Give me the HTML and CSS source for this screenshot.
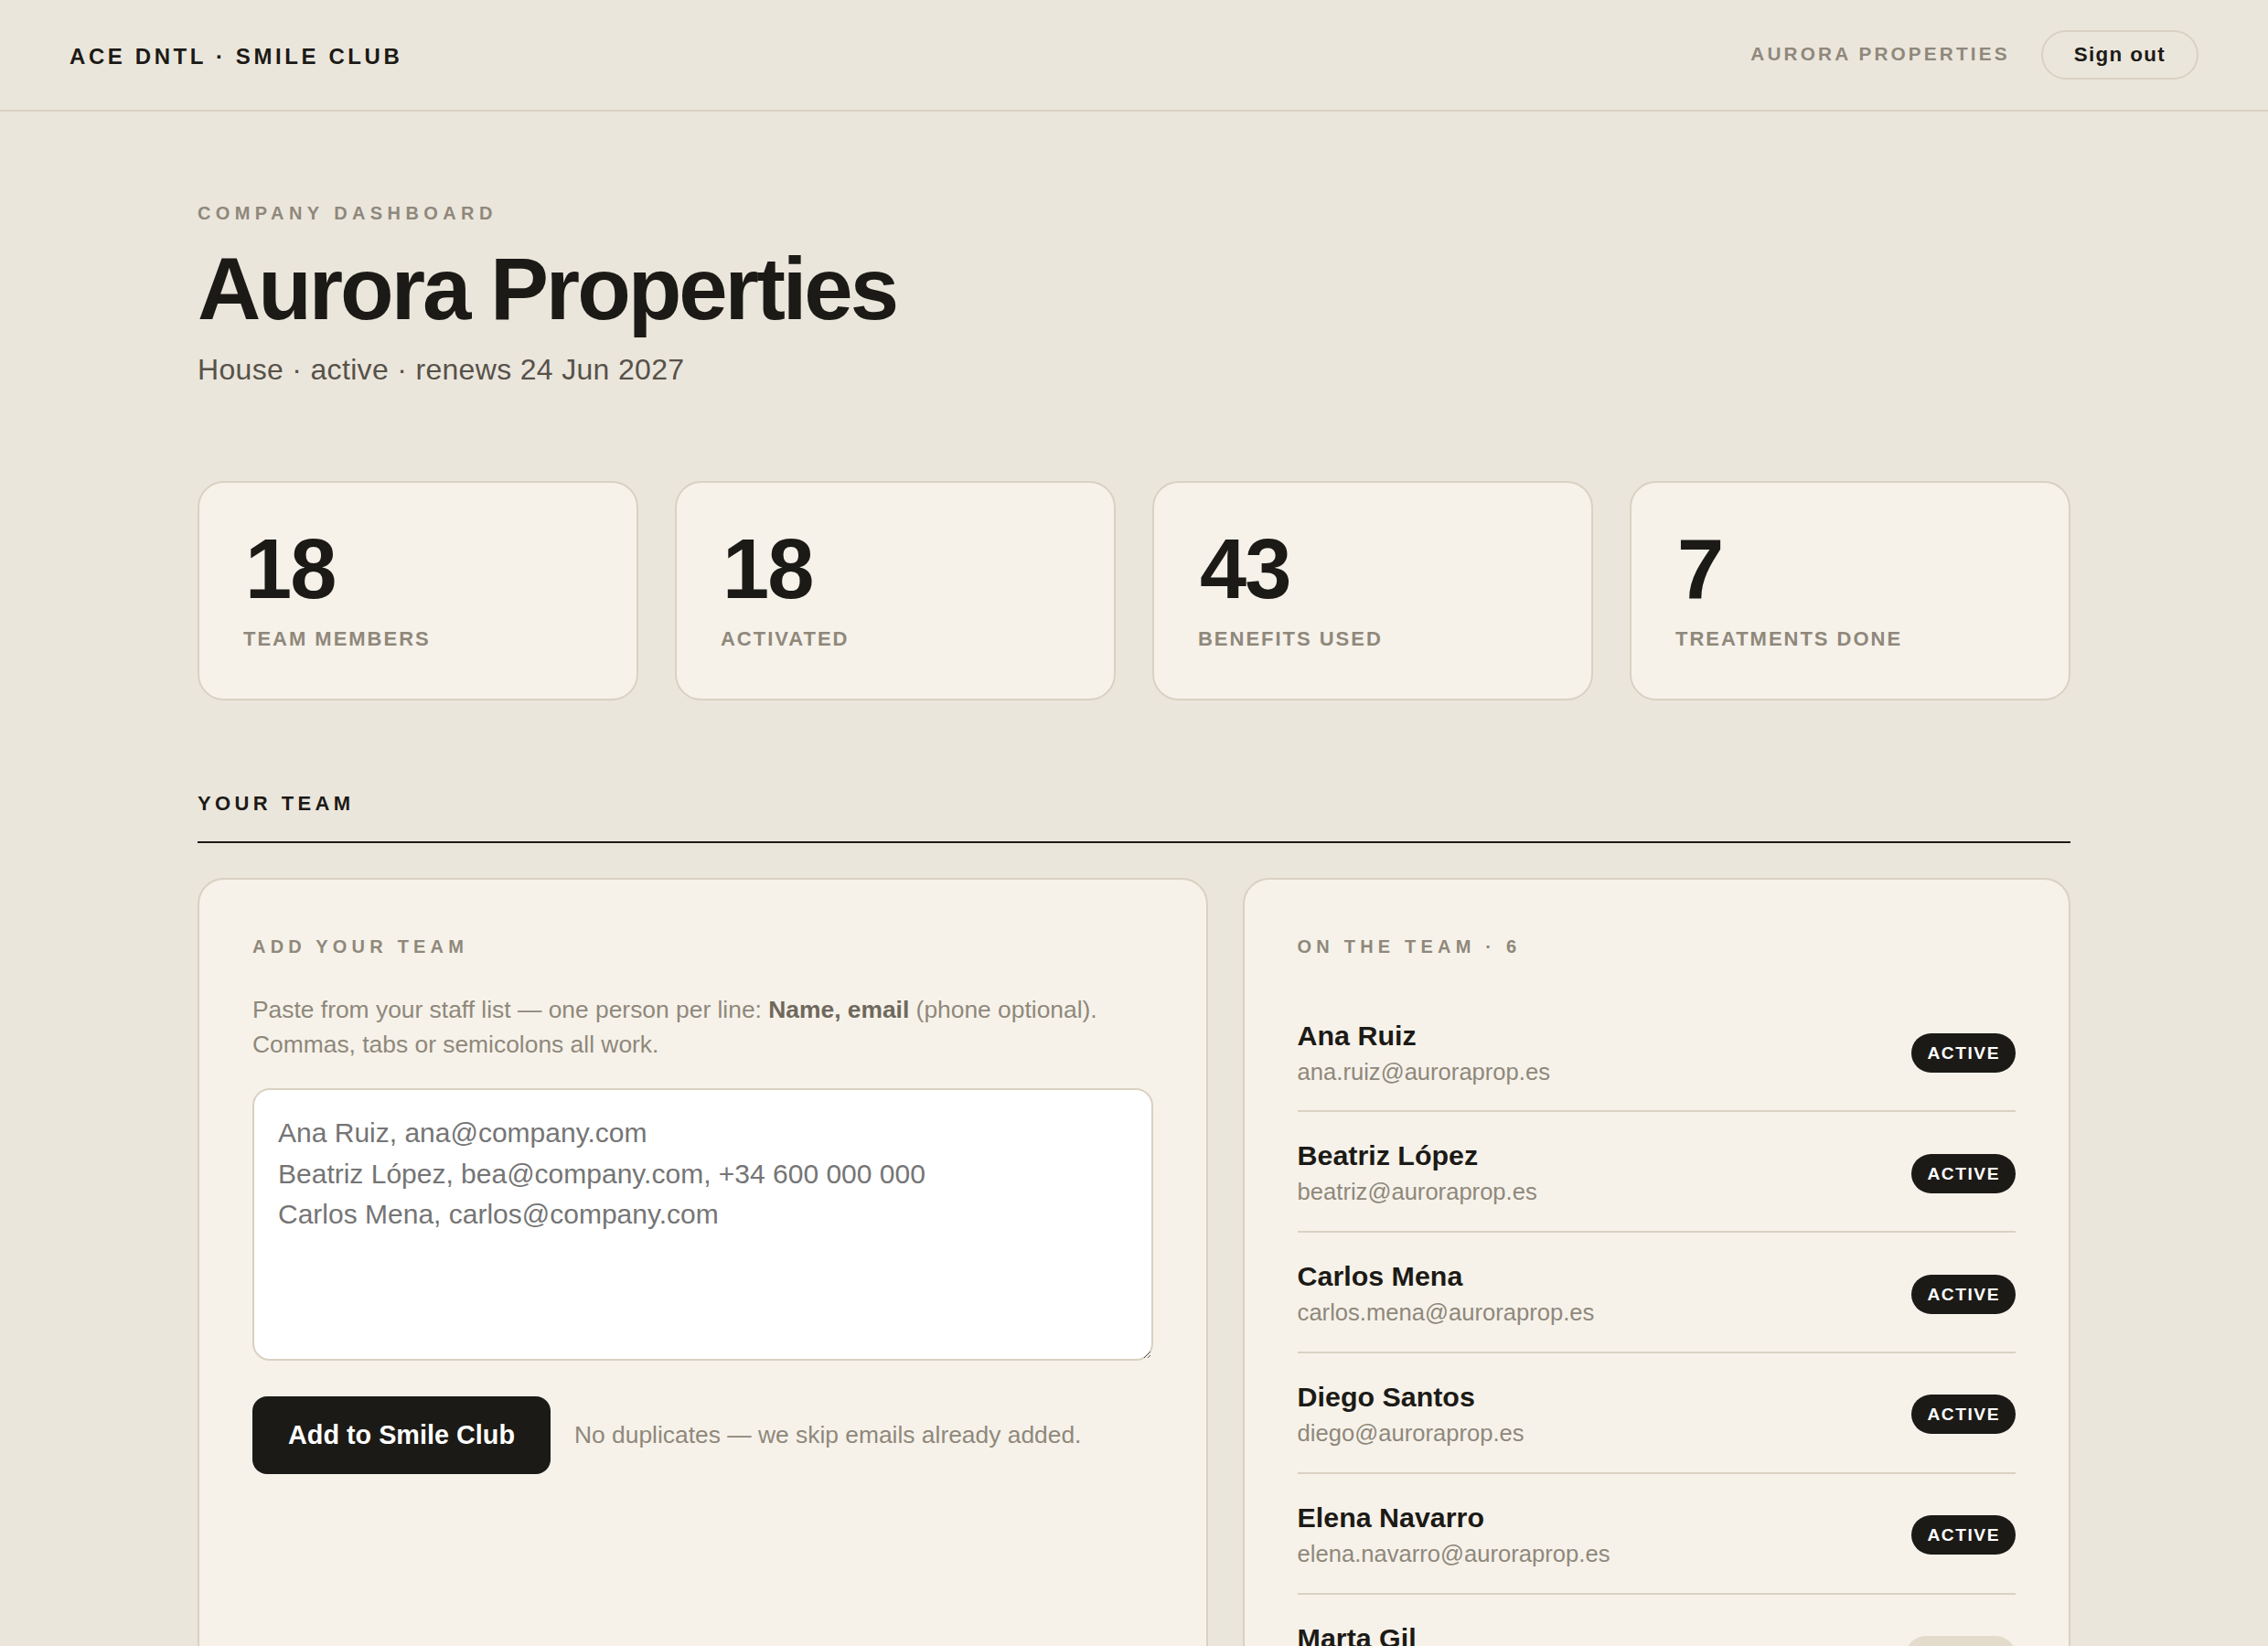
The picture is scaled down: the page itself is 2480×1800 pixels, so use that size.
FILE: index.html
```html
<!DOCTYPE html>
<html lang="en">
<head>
<meta charset="utf-8">
<title>Aurora Properties · Company dashboard</title>
<link rel="stylesheet" href="styles.css">
</head>
<body>
<header class="topbar">
  <div class="brand">ACE DNTL · SMILE CLUB</div>
  <div class="account">
    <span class="account-name">AURORA PROPERTIES</span>
    <button class="signout" type="button">Sign out</button>
  </div>
</header>

<main class="page">
  <section class="intro">
    <p class="eyebrow">COMPANY DASHBOARD</p>
    <h1 class="title">Aurora Properties</h1>
    <p class="subtitle">House · active · renews 24 Jun 2027</p>
  </section>

  <section class="stats">
    <div class="stat">
      <div class="stat-value">18</div>
      <div class="stat-label">TEAM MEMBERS</div>
    </div>
    <div class="stat">
      <div class="stat-value">18</div>
      <div class="stat-label">ACTIVATED</div>
    </div>
    <div class="stat">
      <div class="stat-value">43</div>
      <div class="stat-label">BENEFITS USED</div>
    </div>
    <div class="stat">
      <div class="stat-value">7</div>
      <div class="stat-label">TREATMENTS DONE</div>
    </div>
  </section>

  <h2 class="section-title">YOUR TEAM</h2>

  <section class="team">
    <div class="panel add-panel">
      <p class="panel-label">ADD YOUR TEAM</p>
      <p class="help"><span>Paste from your staff list — one person per line: </span><strong>Name, email</strong><span> (phone optional).</span><br><span>Commas, tabs or semicolons all work.</span></p>
      <textarea class="paste" spellcheck="false">Ana Ruiz, ana@company.com
Beatriz López, bea@company.com, +34 600 000 000
Carlos Mena, carlos@company.com</textarea>
      <div class="actions">
        <button class="primary" type="button">Add to Smile Club</button>
        <span class="hint">No duplicates — we skip emails already added.</span>
      </div>
    </div>

    <div class="panel list-panel">
      <p class="panel-label">ON THE TEAM · 6</p>
      <ul class="members">
        <li class="member">
          <div class="member-info">
            <div class="member-name">Ana Ruiz</div>
            <div class="member-email">ana.ruiz@auroraprop.es</div>
          </div>
          <span class="badge">ACTIVE</span>
        </li>
        <li class="member">
          <div class="member-info">
            <div class="member-name">Beatriz López</div>
            <div class="member-email">beatriz@auroraprop.es</div>
          </div>
          <span class="badge">ACTIVE</span>
        </li>
        <li class="member">
          <div class="member-info">
            <div class="member-name">Carlos Mena</div>
            <div class="member-email">carlos.mena@auroraprop.es</div>
          </div>
          <span class="badge">ACTIVE</span>
        </li>
        <li class="member">
          <div class="member-info">
            <div class="member-name">Diego Santos</div>
            <div class="member-email">diego@auroraprop.es</div>
          </div>
          <span class="badge">ACTIVE</span>
        </li>
        <li class="member">
          <div class="member-info">
            <div class="member-name">Elena Navarro</div>
            <div class="member-email">elena.navarro@auroraprop.es</div>
          </div>
          <span class="badge">ACTIVE</span>
        </li>
        <li class="member">
          <div class="member-info">
            <div class="member-name">Marta Gil</div>
            <div class="member-email">marta.gil@auroraprop.es</div>
          </div>
          <span class="badge badge-invited">INVITED</span>
        </li>
      </ul>
    </div>
  </section>
</main>
</body>
</html>
```

FILE: styles.css
```css
body {
  margin: 0;
  background: #ebe6dc;
  color: #1c1a16;
  font-family: "Liberation Sans", Arial, Helvetica, sans-serif;
}

/* Top bar */
.topbar {
  display: flex;
  align-items: center;
  justify-content: space-between;
  height: 120px;
  padding: 0 76px;
  border-bottom: 2px solid #d9d1c2;
}

.brand {
  padding-top: 4px;
  font-size: 24px;
  font-weight: 700;
  letter-spacing: 0.15em;
}

.account {
  display: flex;
  align-items: center;
  gap: 34px;
}

.account-name {
  padding-bottom: 2px;
  font-size: 20.8px;
  font-weight: 700;
  letter-spacing: 0.15em;
  color: #8f887b;
}

.signout {
  font-family: inherit;
  font-size: 22.4px;
  line-height: 1.2;
  font-weight: 700;
  letter-spacing: 0.06em;
  color: #1c1a16;
  background: transparent;
  border: 2px solid #d9d1c2;
  border-radius: 999px;
  padding: 12px 34px;
}

/* Page */
.page {
  max-width: 2048px;
  margin: 0 auto;
  padding: 99px 0 80px;
}

.eyebrow {
  margin: 0;
  font-size: 20px;
  line-height: 1.2;
  font-weight: 700;
  letter-spacing: 0.27em;
  color: #8f887b;
}

.title {
  margin: 18px 0 0;
  font-size: 96px;
  line-height: 1.1;
  font-weight: 700;
  letter-spacing: -0.032em;
}

.subtitle {
  margin: 13px 0 0;
  font-size: 32px;
  line-height: 1.4;
  letter-spacing: 0.01em;
  color: #57524a;
}

/* Stats */
.stats {
  display: grid;
  grid-template-columns: repeat(4, minmax(0, 1fr));
  gap: 40px;
  margin-top: 100px;
}

.stat {
  background: #f6f2ea;
  border: 2px solid #d9d1c2;
  border-radius: 28.8px;
  padding: 42px 48px 51.6px;
}

.stat-value {
  padding-left: 2px;
  font-size: 92px;
  line-height: 1.15;
  font-weight: 700;
  letter-spacing: -0.02em;
}

.stat-label {
  margin-top: 10px;
  font-size: 22px;
  line-height: 1.2;
  font-weight: 700;
  letter-spacing: 0.09em;
  color: #8f887b;
}

/* Team section */
.section-title {
  margin: 100px 0 0;
  padding-bottom: 27px;
  border-bottom: 2px solid #1c1a16;
  font-size: 22px;
  line-height: 1.2;
  font-weight: 700;
  letter-spacing: 0.2em;
}

.team {
  display: grid;
  grid-template-columns: minmax(0, 1.22fr) minmax(0, 1fr);
  gap: 38px;
  margin-top: 38px;
}

.panel {
  background: #f6f2ea;
  border: 2px solid #d9d1c2;
  border-radius: 28.8px;
  padding: 60px 58px;
}

.panel-label {
  margin: 0 0 37px;
  font-size: 20px;
  line-height: 1.3;
  font-weight: 700;
  letter-spacing: 0.26em;
  color: #8f887b;
}

.help {
  margin: 0 0 29px;
  font-size: 26.4px;
  line-height: 1.45;
  color: #8f887b;
}

.help strong {
  color: #6f685c;
}

.paste {
  display: block;
  width: 100%;
  box-sizing: border-box;
  height: 298px;
  margin: 0;
  padding: 25px 26px;
  font-family: inherit;
  font-size: 30px;
  line-height: 1.48;
  color: #757575;
  background: #ffffff;
  border: 2px solid #d9d1c2;
  border-radius: 19px;
  resize: vertical;
}

.actions {
  display: flex;
  align-items: center;
  gap: 26px;
  margin-top: 39px;
}

.primary {
  font-family: inherit;
  font-size: 28.8px;
  line-height: 1.2;
  font-weight: 700;
  color: #ffffff;
  background: #1c1a16;
  border: 0;
  border-radius: 16px;
  padding: 25px 39px;
}

.hint {
  font-size: 26.4px;
  color: #8f887b;
}

/* Members list */
.members {
  list-style: none;
  margin: 0;
  padding: 0;
}

.member {
  display: flex;
  align-items: center;
  justify-content: space-between;
  padding: 28px 0 24px;
}

.member + .member {
  border-top: 2px solid #d9d1c2;
}

.member-name {
  font-size: 30.4px;
  line-height: 1.25;
  font-weight: 700;
  margin-bottom: 4px;
}

.member-email {
  font-size: 25.6px;
  line-height: 1.4;
  color: #8f887b;
}

.badge {
  font-size: 19.2px;
  line-height: 1.2;
  font-weight: 700;
  letter-spacing: 0.08em;
  color: #ffffff;
  background: #1c1a16;
  border-radius: 999px;
  padding: 10px 17px;
}

.badge-invited {
  background: #e3dccd;
  color: #6b6458;
}
```
